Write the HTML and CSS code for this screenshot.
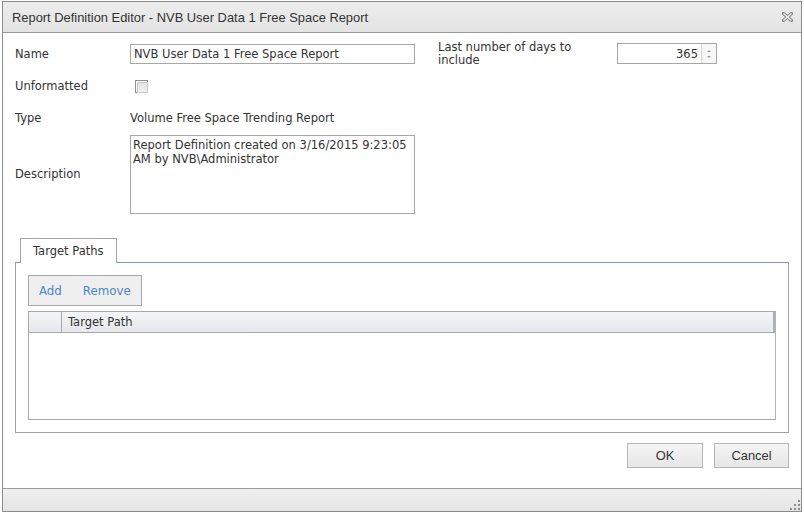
FILE: index.html
```html
<!DOCTYPE html>
<html lang="en">
<head>
    <meta charset="UTF-8">
    <title>Report Definition Editor</title>
    <link rel="stylesheet" href="styles.css">
</head>
<body>

    <div class="window">
        <div class="titlebar">
            <span class="title">Report Definition Editor - NVB User Data 1 Free Space Report</span>
            <svg class="close" width="11" height="10" viewBox="0 0 11 10">
                <path d="M1.5 1.5 L9.5 8.5 M9.5 1.5 L1.5 8.5" stroke="#858585" stroke-width="3.2" stroke-linecap="square" fill="none"/>
                <path d="M1.5 1.5 L9.5 8.5 M9.5 1.5 L1.5 8.5" stroke="#f4f4f4" stroke-width="1.3" fill="none"/>
            </svg>
        </div>

        <div class="content">
            <div class="form">
                <div class="fields">
                    <div class="lbl">Name</div>
                    <div class="textbox">NVB User Data 1 Free Space Report</div>

                    <div class="lbl">Unformatted</div>
                    <div class="check-cell"><span class="checkbox"></span></div>

                    <div class="lbl">Type</div>
                    <div class="lbl">Volume Free Space Trending Report</div>

                    <div class="lbl desc-lbl">Description</div>
                    <div class="textarea">Report Definition created on 3/16/2015 9:23:05 AM by NVB\Administrator</div>
                </div>

                <div class="days">
                    <div class="days-lbl">Last number of days to include</div>
                    <div class="spinner">
                        <span class="spin-value">365</span>
                        <span class="spin-btns">
                            <span class="arrow up"></span>
                            <span class="arrow down"></span>
                        </span>
                    </div>
                </div>
            </div>

            <div class="tabs">
                <div class="tabstrip">
                    <div class="tab">Target Paths</div>
                </div>
                <div class="panel">
                    <div class="toolbar">
                        <a href="#">Add</a>
                        <a href="#">Remove</a>
                    </div>
                    <div class="grid">
                        <div class="grid-head">
                            <div class="col-sel"></div>
                            <div class="col-path">Target Path</div>
                        </div>
                        <div class="grid-body"></div>
                    </div>
                </div>
            </div>

            <div class="buttons">
                <button class="btn btn-ok">OK</button>
                <button class="btn btn-cancel">Cancel</button>
            </div>
        </div>

        <div class="statusbar">
            <span class="grip"></span>
        </div>
    </div>

</body>
</html>
```

FILE: styles.css
```css
* {
    margin: 0;
    padding: 0;
    box-sizing: border-box;
}

body {
    background: #ffffff;
    font-family: 'DejaVu Sans', Verdana, sans-serif;
    font-size: 11.5px;
    color: #333333;
}

.window {
    margin: 1px 0 0 2px;
    width: 800px;
    height: 511px;
    border: 1px solid #8c8c8c;
    display: flex;
    flex-direction: column;
    background: #ffffff;
}

.titlebar {
    height: 31px;
    flex: none;
    display: flex;
    align-items: center;
    justify-content: space-between;
    padding: 0 8px 0 9px;
    background: linear-gradient(to bottom, #ededed, #e3e3e3);
    border-bottom: 1px solid #9a9a9a;
}

.title {
    font-family: 'Liberation Sans', Arial, sans-serif;
    font-size: 12.9px;
    color: #333333;
}

.close {
    display: block;
}

.content {
    flex: 1;
    padding: 11px 12px 0 12px;
    display: flex;
    flex-direction: column;
}

.form {
    display: flex;
    gap: 23px;
}

.fields {
    display: grid;
    grid-template-columns: 115px 285px;
    grid-template-rows: 32px 32px 27px 79px;
    align-items: start;
}

.lbl {
    line-height: 21px;
    white-space: nowrap;
}

.desc-lbl {
    align-self: center;
}

.textbox {
    height: 20px;
    border: 1px solid #a7a7a7;
    padding: 0 3px;
    line-height: 19px;
}

.check-cell {
    height: 20px;
    display: flex;
    align-items: center;
    padding-left: 5px;
}

.checkbox {
    width: 13px;
    height: 13px;
    border: 1px solid #8e8e8e;
    padding: 1px;
    background: #ffffff;
    display: block;
}

.checkbox::after {
    content: '';
    display: block;
    width: 100%;
    height: 100%;
    border: 1px solid #c9c9c9;
    background: linear-gradient(to bottom, #e4e4e4, #f0f0f0);
}

.textarea {
    height: 79px;
    border: 1px solid #a7a7a7;
    padding: 2px 2px;
    line-height: 14px;
}

.days {
    display: grid;
    grid-template-columns: 179px 100px;
    align-items: start;
}

.days-lbl {
    width: 150px;
    line-height: 13px;
    margin-top: -3px;
}

.spinner {
    height: 21px;
    margin-top: -1px;
    border: 1px solid #a7a7a7;
    display: flex;
}

.spin-value {
    flex: 1;
    text-align: right;
    line-height: 20px;
    padding-right: 3px;
}

.spin-btns {
    width: 15px;
    border-left: 1px solid #d6d6d6;
    background: #f7f7f7;
    display: flex;
    flex-direction: column;
    align-items: center;
    justify-content: center;
    gap: 4px;
}

.arrow {
    width: 0;
    height: 0;
    border-left: 2px solid transparent;
    border-right: 2px solid transparent;
}

.arrow.up {
    border-bottom: 2px solid #9a9a9a;
}

.arrow.down {
    border-top: 2px solid #9a9a9a;
}

.tabs {
    margin-top: 24px;
}

.tabstrip {
    display: flex;
    padding-left: 5px;
}

.tab {
    width: 97px;
    height: 25px;
    margin-bottom: -1px;
    border: 1px solid #a3a3a3;
    border-bottom: none;
    background: #ffffff;
    padding-left: 12px;
    line-height: 25px;
    position: relative;
    z-index: 1;
}

.panel {
    height: 171px;
    border: 1px solid #a3a3a3;
    border-top-color: #8198bd;
    padding: 12px;
}

.toolbar {
    width: 114px;
    height: 31px;
    background: #efefef;
    border: 1px solid #a8a8a8;
    display: flex;
    align-items: center;
    padding-left: 10px;
    gap: 21px;
}

.toolbar a {
    color: #4a87c7;
    text-decoration: none;
    font-size: 11.8px;
}

.grid {
    margin-top: 5px;
    height: 109px;
    border: 1px solid #a8a8a8;
    border-right-color: #b0b4bc;
    display: flex;
    flex-direction: column;
}

.grid-head {
    height: 21px;
    display: flex;
    background: linear-gradient(to bottom, #f4f5f7, #e6e8eb);
    border-bottom: 1px solid #a8a8a8;
    border-right: 2px solid #abafb8;
}

.col-sel {
    width: 33px;
    border-right: 1px solid #a8a8a8;
}

.col-path {
    padding-left: 6px;
    line-height: 21px;
}

.grid-body {
    flex: 1;
}

.buttons {
    display: flex;
    justify-content: flex-end;
    gap: 11px;
    margin-top: 10px;
}

.btn {
    height: 25px;
    border: 1px solid #b5b5b5;
    background: linear-gradient(to bottom, #f5f5f5, #e6e6e6);
    font-family: 'Liberation Sans', Arial, sans-serif;
    font-size: 12.9px;
    color: #333333;
}

.btn-ok {
    width: 76px;
}

.btn-cancel {
    width: 75px;
}

.statusbar {
    height: 23px;
    flex: none;
    border-top: 1px solid #9a9a9a;
    background: linear-gradient(to bottom, #f0f0f0, #e4e4e4);
    display: flex;
    justify-content: flex-end;
    align-items: flex-end;
    padding: 0 1px 1px 0;
}

.grip {
    width: 10px;
    height: 10px;
    background:
        linear-gradient(#8c8c8c, #8c8c8c) 8px 0 / 2px 2px no-repeat,
        linear-gradient(#8c8c8c, #8c8c8c) 4px 4px / 2px 2px no-repeat,
        linear-gradient(#8c8c8c, #8c8c8c) 8px 4px / 2px 2px no-repeat,
        linear-gradient(#8c8c8c, #8c8c8c) 0 8px / 2px 2px no-repeat,
        linear-gradient(#8c8c8c, #8c8c8c) 4px 8px / 2px 2px no-repeat,
        linear-gradient(#8c8c8c, #8c8c8c) 8px 8px / 2px 2px no-repeat;
}
```
